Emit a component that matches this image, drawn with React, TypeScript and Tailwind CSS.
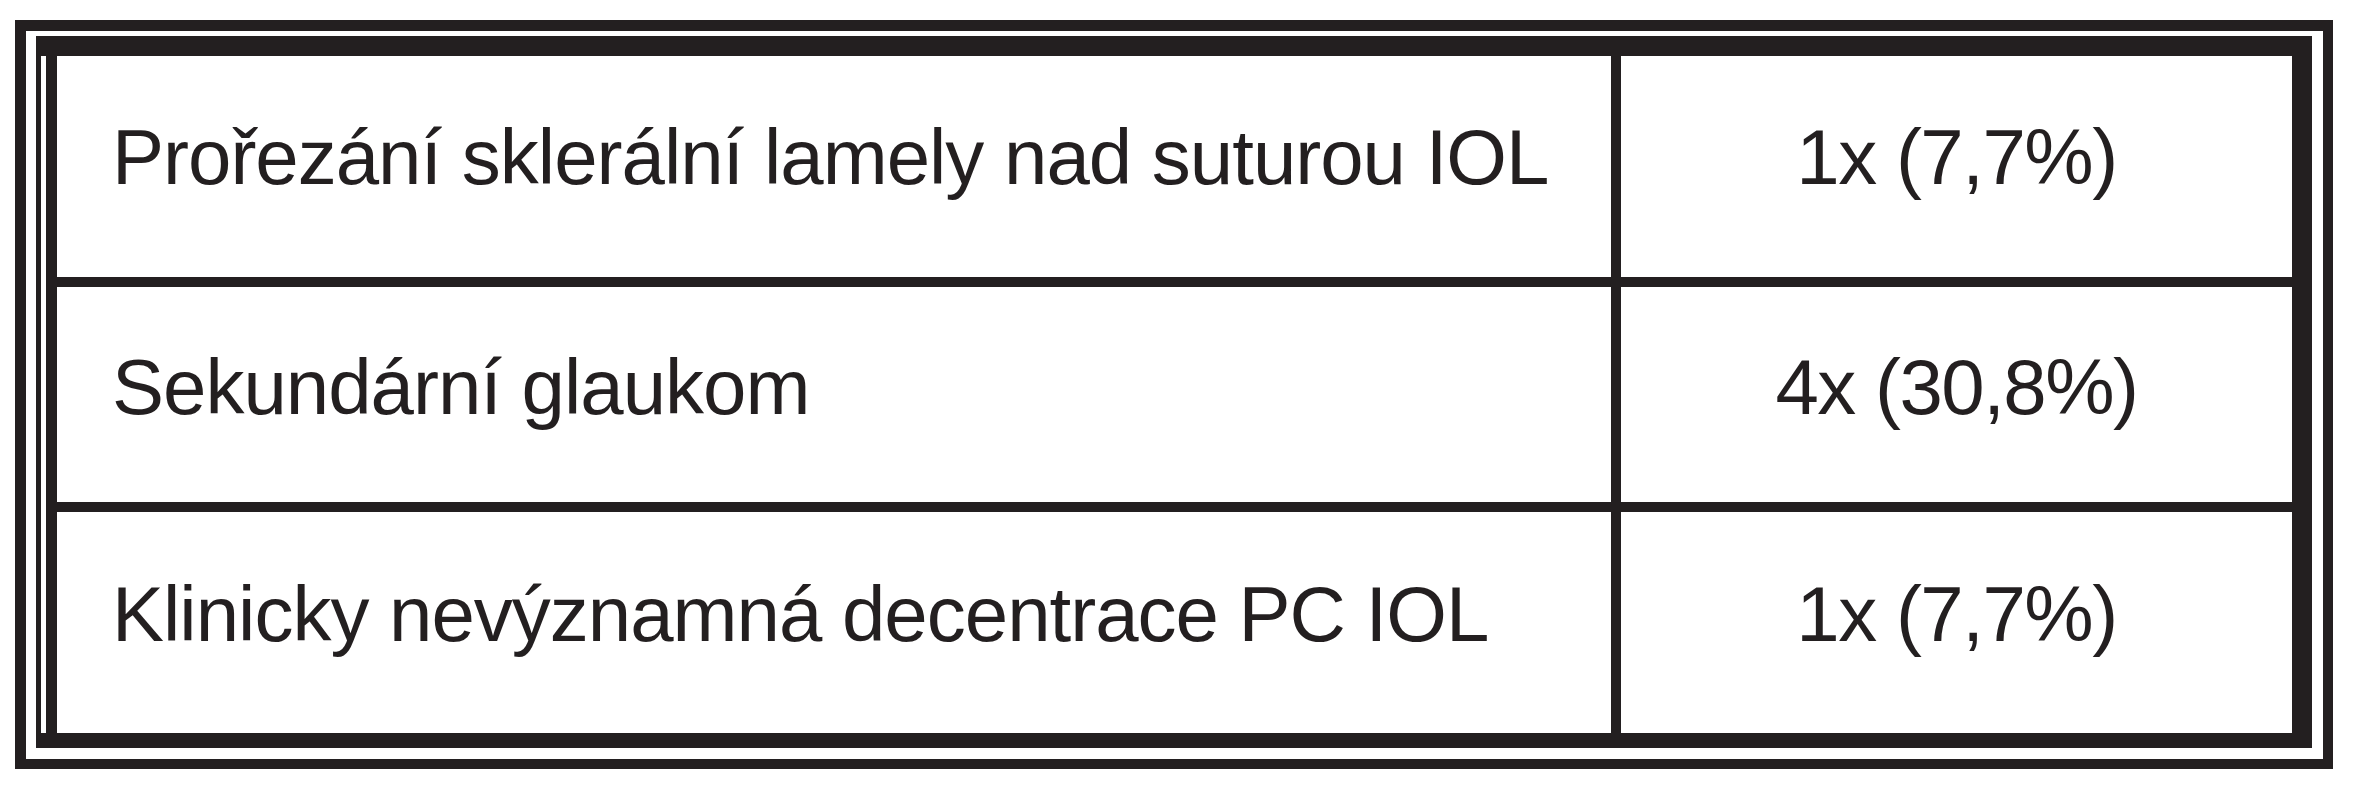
const rows = [
  { label: "Prořezání sklerální lamely nad suturou IOL", value: "1x (7,7%)", h: "h-[231px]", pt: "pt-[62px]", line: true },
  { label: "Sekundární glaukom", value: "4x (30,8%)", h: "h-[225px]", pt: "pt-[61px]", line: true },
  { label: "Klinicky nevýznamná decentrace PC IOL", value: "1x (7,7%)", h: "h-[221px]", pt: "pt-[63px]", line: false },
];

export default function App() {
  return (
    <div className="w-[2369px] h-[800px] bg-white pt-[20px] pl-[15px] font-['Liberation_Sans',Arial,sans-serif] text-[#231f20]">
      {/* outer frame */}
      <div className="w-[2318px] h-[749px] border-[#231f20] border-t-[11px] border-l-[11px] border-r-[10px] border-b-[10px] pt-[5px] pl-[10px] pr-[11px] pb-[11px]">
        {/* inner frame */}
        <div className="h-full flex border-[#231f20] border-t-[20px] border-r-[20px] border-b-[15px] border-l-[5px]">
          <div className="pl-[5px] bg-white" />
          <div className="flex-1 border-l-[11px] border-[#231f20] flex flex-col">
            {rows.map((r) => (
              <div
                key={r.label}
                className={`grid grid-cols-[1564px_1fr] ${r.h} ${r.line ? "border-b-[10px] border-[#231f20]" : ""}`}
              >
                <div className={`border-r-[10px] border-[#231f20] pl-[55px] ${r.pt} text-[78px] leading-none tracking-[-1px] whitespace-nowrap`}>
                  {r.label}
                </div>
                <div className={`${r.pt} text-center text-[78px] leading-none tracking-[-1.5px] whitespace-nowrap`}>
                  {r.value}
                </div>
              </div>
            ))}
          </div>
        </div>
      </div>
    </div>
  );
}
